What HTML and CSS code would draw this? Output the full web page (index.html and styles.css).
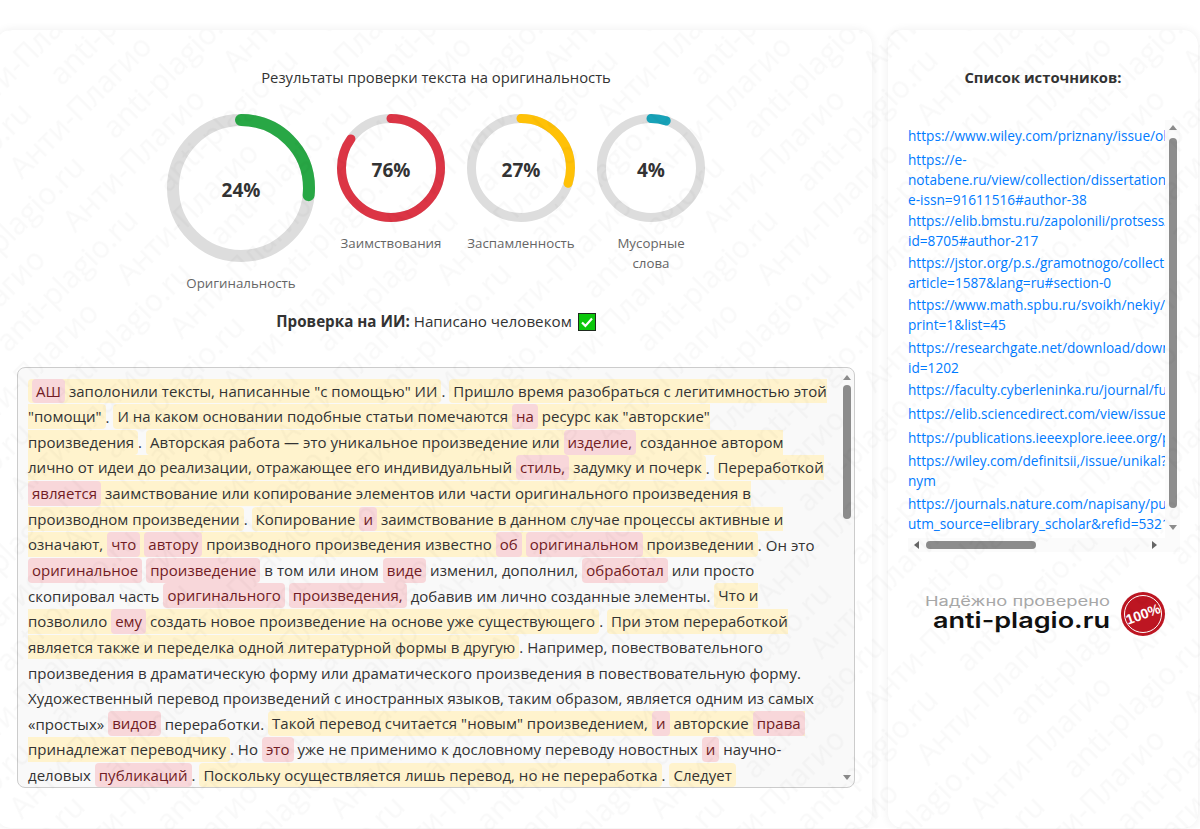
FILE: index.html
```html
<!DOCTYPE html>
<html lang="ru">
<head>
<meta charset="utf-8">
<title>Результаты проверки текста</title>
<link rel="stylesheet" href="styles.css">
</head>
<body>
<div class="page">
  <section class="card card-main">
    <h2 class="title">Результаты проверки текста на оригинальность</h2>
    <div class="gauges">
      <div class="gauge gauge-lg">
        <div class="ring">
          <svg width="148" height="148" viewBox="0 0 148 148"><circle class="track" cx="74" cy="74" r="68"/><circle class="arc arc-green" cx="74" cy="74" r="68" pathLength="100" stroke-dasharray="26.7 100" transform="rotate(-90 74 74)"/></svg>
          <span class="pct">24%</span>
        </div>
        <div class="label">Оригинальность</div>
      </div>
      <div class="gauge">
        <div class="ring">
          <svg width="108" height="108" viewBox="0 0 108 108"><circle class="track" cx="54" cy="54" r="49.5"/><circle class="arc arc-red" cx="54" cy="54" r="49.5" pathLength="100" stroke-dasharray="85 100" transform="rotate(-90 54 54)"/></svg>
          <span class="pct">76%</span>
        </div>
        <div class="label">Заимствования</div>
      </div>
      <div class="gauge">
        <div class="ring">
          <svg width="108" height="108" viewBox="0 0 108 108"><circle class="track" cx="54" cy="54" r="49.5"/><circle class="arc arc-yellow" cx="54" cy="54" r="49.5" pathLength="100" stroke-dasharray="30 100" transform="rotate(-90 54 54)"/></svg>
          <span class="pct">27%</span>
        </div>
        <div class="label">Заспамленность</div>
      </div>
      <div class="gauge">
        <div class="ring">
          <svg width="108" height="108" viewBox="0 0 108 108"><circle class="track" cx="54" cy="54" r="49.5"/><circle class="arc arc-blue" cx="54" cy="54" r="49.5" pathLength="100" stroke-dasharray="5 100" transform="rotate(-90 54 54)"/></svg>
          <span class="pct">4%</span>
        </div>
        <div class="label">Мусорные<br>слова</div>
      </div>
    </div>
    <div class="ai-check"><b>Проверка на ИИ:</b> Написано человеком <svg class="ok-icon" width="18" height="18" viewBox="0 0 18 18"><rect x="0.5" y="0.5" width="17" height="17" fill="#0cc80c" stroke="#1f2a1f"/><path d="M4 9.5l3.4 3.4L14 5.6" fill="none" stroke="#fff" stroke-width="2.2"/></svg></div>
    <div class="textbox">
      <div class="textbody">
<span class="y"><span class="p">АШ</span> заполонили тексты, написанные "с помощью" ИИ</span>. <span class="y">Пришло время разобраться с легитимностью этой<br>"помощи"</span>. <span class="y">И на каком основании подобные статьи помечаются <span class="p">на</span> ресурс как "авторские"<br>произведения</span>. <span class="y">Авторская работа — это уникальное произведение или <span class="p">изделие,</span> созданное автором<br>лично от идеи до реализации, отражающее его индивидуальный <span class="p">стиль,</span> задумку и почерк</span>. <span class="y">Переработкой<br><span class="p">является</span> заимствование или копирование элементов или части оригинального произведения в<br>производном произведении</span>. <span class="y">Копирование <span class="p">и</span> заимствование в данном случае процессы активные и<br>означают, <span class="p">что</span> <span class="p">автору</span> производного произведения известно <span class="p">об</span> <span class="p">оригинальном</span> произведении</span>. Он это<br><span class="p">оригинальное</span> <span class="p">произведение</span> в том или ином <span class="p">виде</span> изменил, дополнил, <span class="p">обработал</span> или просто<br>скопировал часть <span class="p">оригинального</span> <span class="p">произведения,</span> добавив им лично созданные элементы. <span class="y">Что и<br>позволило <span class="p">ему</span> создать новое произведение на основе уже существующего</span>. <span class="y">При этом переработкой<br>является также и переделка одной литературной формы в другую</span>. Например, повествовательного<br>произведения в драматическую форму или драматического произведения в повествовательную форму.<br>Художественный перевод произведений с иностранных языков, таким образом, является одним из самых<br>«простых» <span class="p">видов</span> переработки. <span class="y">Такой перевод считается "новым" произведением, <span class="p">и</span> авторские <span class="p">права</span><br>принадлежат переводчику</span>. Но <span class="p">это</span> уже не применимо к дословному переводу новостных <span class="p">и</span> научно-<br>деловых <span class="p">публикаций</span>. <span class="y">Поскольку осуществляется лишь перевод, но не переработка</span>. <span class="y">Следует</span>
      </div>
      <div class="vbar vbar-main">
        <i class="arrow arrow-up"></i>
        <i class="thumb-v"></i>
        <i class="arrow arrow-down"></i>
      </div>
    </div>
  </section>
  <aside class="card card-side">
    <h2 class="title title-bold">Список источников:</h2>
    <div class="sources">
      <ul class="source-list">
        <li class="s1"><a href="#">https://www.wiley.com/priznany/issue/olimpiada</a></li>
        <li class="s3"><a href="#">https://e-<br>notabene.ru/view/collection/dissertation?<br>e-issn=91611516#author-38</a></li>
        <li><a href="#">https://elib.bmstu.ru/zapolonili/protsess/?<br>id=8705#author-217</a></li>
        <li><a href="#">https://jstor.org/p.s./gramotnogo/collection?<br>article=1587&amp;lang=ru#section-0</a></li>
        <li><a href="#">https://www.math.spbu.ru/svoikh/nekiy/page?<br>print=1&amp;list=45</a></li>
        <li><a href="#">https://researchgate.net/download/download?<br>id=1202</a></li>
        <li class="s1"><a href="#">https://faculty.cyberleninka.ru/journal/full</a></li>
        <li class="s1"><a href="#">https://elib.sciencedirect.com/view/issue/1</a></li>
        <li class="s1"><a href="#">https://publications.ieeexplore.ieee.org/p</a></li>
        <li><a href="#">https://wiley.com/definitsii,/issue/unikal?<br>nym</a></li>
        <li><a href="#">https://journals.nature.com/napisany/public?<br>utm_source=elibrary_scholar&amp;refid=5321</a></li>
      </ul>
      <div class="vbar vbar-side">
        <i class="arrow arrow-up"></i>
        <i class="thumb-v"></i>
        <i class="arrow arrow-down"></i>
      </div>
      <div class="hbar">
        <i class="arrow arrow-left"></i>
        <i class="thumb-h"></i>
        <i class="arrow arrow-right"></i>
      </div>
    </div>
    <svg class="logo" width="250" height="50" viewBox="0 0 250 50">
      <text class="logo-top" x="5" y="16" textLength="185" lengthAdjust="spacingAndGlyphs">Надёжно проверено</text>
      <text class="logo-main" x="13" y="38" textLength="177" lengthAdjust="spacingAndGlyphs">anti-plagio.ru</text>
      <circle cx="223" cy="24" r="22" fill="#bd1622"/>
      <circle cx="223" cy="24" r="18.5" fill="none" stroke="#fff" stroke-width="1"/>
      <text class="logo-badge" x="223" y="29" text-anchor="middle" transform="rotate(-20 223 24)">100%</text>
    </svg>
  </aside>
</div>
<svg class="watermark" aria-hidden="true">
  <defs>
    <pattern id="wm" width="226.27" height="75.42" patternUnits="userSpaceOnUse" patternTransform="rotate(-45)">
      <text class="wm-text" x="114.5" y="67.4">Анти-Плагио</text>
      <text class="wm-text" x="-111.77" y="67.4">Анти-Плагио</text>
      <text class="wm-text" x="208.6" y="29.7">anti-plagio.ru</text>
      <text class="wm-text" x="-17.67" y="29.7">anti-plagio.ru</text>
    </pattern>
  </defs>
  <rect width="100%" height="100%" fill="url(#wm)"/>
</svg>
</body>
</html>
```
FILE: styles.css
```css
* { box-sizing: border-box; }
html, body { margin: 0; height: 100%; background: #fff; overflow: hidden; }
body { font-family: "Open Sans", "Noto Sans", sans-serif; color: #333; font-size: 15px; }
.page { display: flex; gap: 16px; width: 1202px; height: 829px; margin-left: -4px; padding: 30px 0 1px; }
.card { background: #fff; border-radius: 15px; box-shadow: 0 0 10px rgba(0,0,0,.07); }
.card-main { width: 876px; padding: 37px 17px 0 21px; flex: none; }
.card-side { width: 310px; padding: 37px 0 0 20px; flex: none; }
.title { margin: 0; font-size: 14.8px; line-height: 20px; font-weight: 400; text-align: center; color: #333; }
.title-bold { font-weight: 700; padding-right: 20px; }
.gauges { display: flex; justify-content: center; gap: 22px; margin-top: 27px; align-items: flex-start; }
.gauge { width: 108px; text-align: center; }
.gauge-lg { width: 148px; }
.ring { position: relative; display: flex; }
.pct { position: absolute; inset: 3px 0 0; display: flex; align-items: center; justify-content: center; font-weight: 700; font-size: 19px; color: #333; }
.track, .arc { fill: none; stroke-width: 9; }
.gauge-lg .track, .gauge-lg .arc { stroke-width: 12; }
.track { stroke: #ddd; }
.arc { stroke-linecap: round; }
.arc-green { stroke: #28a745; }
.arc-red { stroke: #dc3545; }
.arc-yellow { stroke: #ffc107; }
.arc-blue { stroke: #17a2b8; }
.label { margin-top: 11px; font-size: 13.3px; line-height: 20px; color: #666; white-space: nowrap; }
.ai-check { margin-top: 10px; height: 36px; line-height: 36px; font-size: 15.2px; text-align: center; }
.ai-check b { font-weight: 700; }
.ok-icon { vertical-align: -4px; margin-left: 2px; }
.textbox { position: relative; height: 421px; margin-top: 28px; border: 1px solid #ccc; border-radius: 8px; background: #f9f9f9; overflow: hidden; }
.textbody { padding: 11px 10px 10px; font-size: 15px; line-height: 25.6px; letter-spacing: .03px; white-space: nowrap; color: #333; }
.y { background: #fff3cd; padding: 2.4px 4px; border-radius: 4px; }
.p { background: #f8d7da; color: #721c24; padding: 2.4px 4px; border-radius: 4px; }
.vbar { position: absolute; top: 0; right: 0; width: 15px; display: flex; flex-direction: column; align-items: center; }
.vbar-main { right: 0; height: 419px; padding: 7px 0; justify-content: space-between; }
.vbar-side { height: 418px; padding: 5px 0 8px; justify-content: space-between; background: #fbfbfb; }
.thumb-v { display: block; width: 8px; border-radius: 4px; background: #8c8c8c; }
.vbar-main .thumb-v { height: 134px; margin: 5px 0 auto; }
.vbar-side .thumb-v { height: 370px; margin: 8px 0 auto; }
.arrow { display: block; width: 0; height: 0; border-style: solid; border-color: transparent; flex: none; }
.arrow-up { border-width: 0 4px 5px; border-bottom-color: #8c8c8c; }
.arrow-down { border-width: 5px 4px 0; border-top-color: #8c8c8c; }
.arrow-left { border-width: 4px 5px 4px 0; border-right-color: #666; }
.arrow-right { border-width: 4px 0 4px 5px; border-left-color: #666; }
.sources { position: relative; height: 432px; margin-top: 33px; width: 272px; }
.source-list { list-style: none; margin: 0; padding: 6px 0 0; width: 257px; height: 418px; overflow: hidden; font-size: 13.65px; line-height: 20px; white-space: nowrap; }
.source-list li { margin-bottom: 2.4px; }
.source-list .s1 { margin-bottom: 3.7px; }
.source-list .s3 { margin-bottom: 1px; }
.source-list a { color: #007bff; text-decoration: none; }
.hbar { position: absolute; left: 0; right: 0; bottom: 0; height: 14px; background: #fbfbfb; display: flex; align-items: center; padding: 0 23px 0 6px; }
.thumb-h { display: block; width: 110px; height: 8px; margin-left: 7px; margin-right: auto; border-radius: 4px; background: #8c8c8c; }
.logo { display: block; margin: 38px 0 0 12px; }
.logo-top { font-family: "Inter", sans-serif; font-size: 13px; fill: #a8a8a8; }
.logo-main { font-family: "Inter", sans-serif; font-weight: 600; font-size: 22px; fill: #111; }
.logo-badge { font-family: "Liberation Sans", sans-serif; font-weight: 700; font-size: 14px; fill: #fff; }
.watermark { position: fixed; inset: 0; width: 100%; height: 100%; pointer-events: none; clip-path: inset(30px 0 0 0); }
.wm-text { font-family: "Open Sans", sans-serif; font-size: 30px; fill: rgba(0,0,0,.024); }
```
